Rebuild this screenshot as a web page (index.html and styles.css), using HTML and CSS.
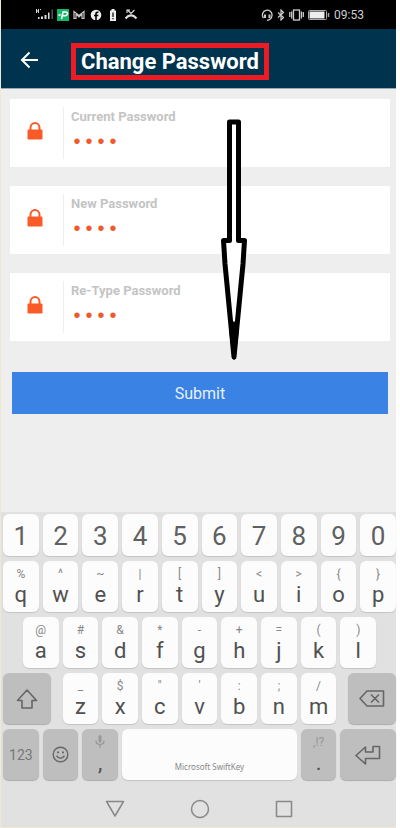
FILE: index.html
```html
<!DOCTYPE html>
<html lang="en">
<head>
<meta charset="utf-8">
<meta name="viewport" content="width=device-width, initial-scale=1">
<title>Change Password</title>
<link rel="stylesheet" href="styles.css">
</head>
<body>
<svg class="defs" aria-hidden="true">
  <symbol id="lock" viewBox="0 0 16 18"><path d="M3.500 8V5.600a4.500 4.500 0 0 1 9 0V8" fill="none" stroke="currentColor" stroke-width="2"/><rect x="0.500" y="7.500" width="15" height="10" rx="1.200" fill="currentColor"/></symbol>
</svg>
<div class="phone">
  <div class="status">
    <div class="status-left">
      <svg width="20" height="14" viewBox="0 0 20 14" fill="#ddd"><path d="M1 1h1v1.500h1V1h1v4H3V3.500H2V5H1zM5 1h1v1H5z"/><path d="M3 9h1.500v2H3zM6 8.500h2V11H6zM9.500 7h2v4h-2zM13 4.500h1.500V11H13z"/><path d="M16.500 1.500H18V11h-1.500z" fill="#555"/></svg>
      <svg width="12" height="12" viewBox="0 0 12 12"><path fill="#12b76a" d="M0 0h12v12H0z"/><path d="M4.500 10 6 3h2.500c3 0 2.200 3.700-.5 3.700H5.500M1.500 6.500l2-1" fill="none" stroke="#fff" stroke-width="1.600"/></svg>
      <svg width="12" height="10" viewBox="0 0 12 10" fill="none" stroke="#ccc" stroke-width="1.200"><path d="M3 8.500H1v-7l5 4 5-4v7H9V4L6 7 3 4z"/></svg>
      <svg width="12" height="12" viewBox="0 0 12 12"><circle cx="6" cy="6" r="5.300" fill="#eee"/><path d="M6 12V4.800Q6 3 8.500 3.300M4 6.500h4.300" fill="none" stroke="#000" stroke-width="1.600"/></svg>
      <svg width="8" height="12" viewBox="0 0 8 12"><path d="M2.500 0h3v1.500H7V12H1V1.500h1.500z" fill="#eee"/><path d="M4 3.500V8M4 9v1.300" stroke="#000" stroke-width="1.200"/></svg>
      <svg width="14" height="11" viewBox="0 0 14 11" fill="none" stroke="#ddd"><path d="m3.500 1 3.500 3.500L10.500 1M3 4V1h3" stroke-width="1.100"/><path d="m1.500 9.500 2.500-2.300q3-1.500 6 0l2.500 2.300" stroke-width="2.200"/></svg>
    </div>
    <div class="status-right">
      <svg width="12" height="12" viewBox="0 0 12 12" fill="none" stroke="#ccc" stroke-width="1.300"><path d="M2.500 9A4.800 4.800 0 1 1 11 6.500Q10.500 11 6 11.300"/><path d="M4 5.500v3.500M8.500 5.500v3.500" stroke-width="2"/></svg>
      <svg width="8" height="12" viewBox="0 0 8 12" fill="none" stroke="#ccc" stroke-width="1.200"><path d="m1 3.500 5.500 5L4 11V1l2.500 2.500L1 8.500"/></svg>
      <svg width="15" height="12" viewBox="0 0 15 12" fill="none" stroke="#ccc" stroke-width="1.300"><rect x="4.500" y="1" width="6" height="10"/><path d="M.8 3v5M2.700 2.500v7M12.400 2.500v7M14.300 3v5"/></svg>
      <svg width="22" height="10" viewBox="0 0 22 10"><rect x=".5" y=".5" width="18" height="9" rx="1" fill="none" stroke="#aaa"/><path d="M1.500 1.500h15v7h-15z" fill="#eee"/><path d="M20.500 3v4" stroke="#aaa" stroke-width="1.500"/></svg>
      <span class="clock">09:53</span>
    </div>
  </div>

  <header class="bar">
    <button class="back" type="button" aria-label="Back"><svg width="19" height="18" viewBox="0 0 19 18" fill="none" stroke="#fff" stroke-width="2"><path d="M18 9H2M9.500 1.500 2 9l7.500 7.500"/></svg></button>
    <h1 class="title">Change Password</h1>
  </header>

  <form class="form">
    <div class="field"><svg class="lock"><use href="#lock"/></svg><div class="entry"><label for="cur">Current Password</label><input id="cur" type="password" value="0000"></div></div>
    <div class="field"><svg class="lock"><use href="#lock"/></svg><div class="entry"><label for="new">New Password</label><input id="new" type="password" value="0000"></div></div>
    <div class="field"><svg class="lock"><use href="#lock"/></svg><div class="entry"><label for="re">Re-Type Password</label><input id="re" type="password" value="0000"></div></div>
    <button class="submit" type="button">Submit</button>
    <svg class="pointer" width="28" height="244" viewBox="0 0 28 244" aria-hidden="true"><path d="M9.500 4h9v118.500h6L23 146l-9 93-9-93-1.500-23.500h6z" fill="#fff" stroke="#000" stroke-width="5" stroke-linejoin="round"/><path d="m14 205-3 10 3 25 3-25z" stroke="#000" stroke-width="3" stroke-linejoin="round"/></svg>
  </form>

  <div class="keyboard">
    <div class="row digits">
      <button class="key">1</button><button class="key">2</button><button class="key">3</button><button class="key">4</button><button class="key">5</button><button class="key">6</button><button class="key">7</button><button class="key">8</button><button class="key">9</button><button class="key">0</button>
    </div>
    <div class="row">
      <button class="key"><small>%</small>q</button><button class="key"><small>^</small>w</button><button class="key"><small>~</small>e</button><button class="key"><small>|</small>r</button><button class="key"><small>[</small>t</button><button class="key"><small>]</small>y</button><button class="key"><small>&lt;</small>u</button><button class="key"><small>&gt;</small>i</button><button class="key"><small>{</small>o</button><button class="key"><small>}</small>p</button>
    </div>
    <div class="row inset">
      <button class="key"><small>@</small>a</button><button class="key"><small>#</small>s</button><button class="key"><small>&amp;</small>d</button><button class="key"><small>*</small>f</button><button class="key"><small>-</small>g</button><button class="key"><small>+</small>h</button><button class="key"><small>=</small>j</button><button class="key"><small>(</small>k</button><button class="key"><small>)</small>l</button>
    </div>
    <div class="row">
      <button class="key dark wide shift" aria-label="Shift"><svg width="22" height="20" viewBox="0 0 22 20" fill="none" stroke="#666" stroke-width="1.600" stroke-linejoin="round"><path d="m11 1 9.500 10.500H16V19H6v-7.500H1.500z"/></svg></button>
      <button class="key"><small>_</small>z</button><button class="key"><small>$</small>x</button><button class="key"><small>"</small>c</button><button class="key"><small>'</small>v</button><button class="key"><small>:</small>b</button><button class="key"><small>;</small>n</button><button class="key"><small>/</small>m</button>
      <button class="key dark wide delete" aria-label="Delete"><svg width="26" height="17" viewBox="0 0 26 17" fill="none" stroke="#666" stroke-width="1.600" stroke-linejoin="round"><path d="M8 1h16.500v15H8L1 8.500zM12 4.500l8 8M20 4.500l-8 8"/></svg></button>
    </div>
    <div class="row">
      <button class="key dark mode">123</button>
      <button class="key dark" aria-label="Emoji"><svg width="17" height="17" viewBox="0 0 17 17" fill="none" stroke="#666" stroke-width="1.400"><circle cx="8.500" cy="8.500" r="7.300"/><path d="M4.500 9.800q4 5 8 0"/><path d="M5 6.300h2M10 6.300h2" stroke-width="1.800"/></svg></button>
      <button class="key dark" aria-label="Comma"><small><svg width="10" height="13" viewBox="0 0 10 13" fill="none" stroke="#999" stroke-width="1.300"><path d="M1 5.500q0 4 4 4t4-4M5 9.500V13"/><path d="M5 1.500V6" stroke-width="3" stroke-linecap="round"/></svg></small>,</button>
      <button class="key space">Microsoft SwiftKey</button>
      <button class="key dark stop"><small>,!?</small>.</button>
      <button class="key dark wide" aria-label="Enter"><svg width="26" height="20" viewBox="0 0 26 20" fill="none" stroke="#666" stroke-width="1.600" stroke-linejoin="round"><path d="m1 10.500 9.500-8.500v5H18V1.500h6.500v12h-14V19z"/></svg></button>
    </div>
  </div>

  <nav class="nav">
    <button aria-label="Back"><svg width="20" height="18" viewBox="0 0 20 18"><path d="M1.500 1.500h17L10 16z"/></svg></button>
    <button aria-label="Home"><svg width="20" height="20" viewBox="0 0 20 20"><circle cx="10" cy="10" r="8.500"/></svg></button>
    <button aria-label="Recent apps"><svg width="18" height="18" viewBox="0 0 18 18"><rect x="1.500" y="1.500" width="15" height="15"/></svg></button>
  </nav>
</div>
</body>
</html>
```
FILE: styles.css
```css
* { box-sizing: border-box; }
body {
  margin: 0;
  padding-right: 4px;
  background: #fff;
  font-family: Roboto, "Liberation Sans", sans-serif;
}
button { border: 0; padding: 0; margin: 0; background: none; font: inherit; color: inherit; }
svg { display: block; flex: none; }
.defs { display: none; }
.phone {
  display: flex;
  flex-direction: column;
  min-height: 100vh;
  border-left: 1px solid #f0e8d0;
  border-bottom: 1px solid #f0e8d0;
  background: #e1e1e1;
}

.status {
  display: flex;
  justify-content: space-between;
  align-items: center;
  height: 29px;
  padding: 0 32px 0 34px;
  background: #000;
}
.status-left { display: flex; align-items: center; gap: 4px; }
.status-left svg:first-child { margin-right: -2px; }
.status-left svg:nth-child(n+4) { margin-left: 1px; }
.status-left svg:nth-child(n+5) { margin-left: 3px; }
.status-right { display: flex; align-items: center; gap: 4px; }
.clock { font-size: 12px; line-height: 16px; color: #ccc; }

.bar {
  display: flex;
  align-items: center;
  gap: 32px;
  height: 60px;
  padding: 6px 20px 0 19px;
  background: #00334e;
  border-bottom: 1px solid #9aa9b3;
}
.back { padding-bottom: 4px; }
.title {
  margin: 0;
  padding: 0 5px;
  border: 5px solid #ed1c24;
  font-size: 22px;
  line-height: 27px;
  font-weight: 700;
  color: #fff;
}

.form {
  position: relative;
  display: flex;
  flex-direction: column;
  gap: 19px;
  padding: 10px 6px 98px 9px;
  background: #eee;
}
.field {
  display: flex;
  align-items: center;
  height: 68px;
  padding: 8px 0;
  background: #fff;
}
.lock { width: 16px; height: 18px; margin: 0 20px 4px 17px; color: #fa5a28; }
.entry {
  flex: 1;
  display: flex;
  flex-direction: column;
  height: 52px;
  padding: 2px 8px 0 7px;
  border-left: 1px solid #eee;
}
.entry label { font-size: 13px; line-height: 16px; font-weight: 700; color: #c4c4c4; }
.entry input {
  width: 100%;
  height: 36px;
  padding: 0;
  border: 0;
  outline: 0;
  background: none;
  font: 20px "Liberation Mono", monospace;
  color: #f0592b;
}
.submit {
  height: 42px;
  margin: 12px 2px 0;
  background: #3a82e4;
  font-size: 16px;
  color: #e8f0fc;
}
.pointer { position: absolute; left: 219px; top: 29px; }

.keyboard {
  display: flex;
  flex-direction: column;
  gap: 5px;
  padding: 2px 0 0 2px;
}
.row { display: grid; grid-template-columns: repeat(20, 1fr); column-gap: 4px; }
.key {
  grid-column: span 2;
  display: flex;
  flex-direction: column;
  align-items: center;
  justify-content: center;
  min-width: 0;
  height: 51px;
  border-radius: 6px;
  background: #fcfcfc;
  box-shadow: 0 1px 1px #c4c4c4;
  font-size: 22px;
  line-height: 26px;
  color: #505050;
}
.key small { display: flex; align-items: center; height: 16px; font-size: 12px; line-height: 16px; color: #888; }
.digits .key { height: 42px; padding-top: 2px; font-size: 26px; color: #606060; }
.inset .key:first-child { grid-column: 2 / span 2; }
.dark { background: #bebebe; box-shadow: 0 1px 1px #aaa; }
.wide { grid-column: span 3; }
.shift { margin-right: 8px; }
.delete { margin-left: 8px; }
.mode { font-size: 14px; color: #777; }
.space {
  grid-column: span 9;
  justify-content: flex-end;
  padding-bottom: 5px;
  font-family: "Noto Sans", sans-serif;
  font-size: 8px;
  line-height: 16px;
  color: #888;
}
.stop small { color: #999; }

.nav {
  flex: 1;
  display: flex;
  justify-content: center;
  align-items: center;
  gap: 65px;
  min-height: 47px;
  padding-top: 10px;
}
.nav svg { fill: none; stroke: #888; stroke-width: 1.500; stroke-linejoin: round; }
```
